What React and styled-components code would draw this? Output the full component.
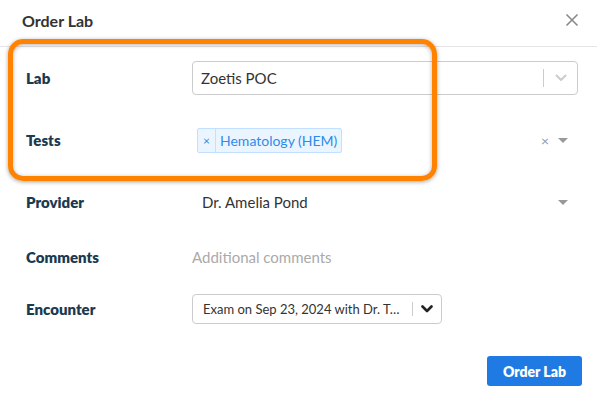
import styled, { createGlobalStyle } from "styled-components";

const Global = createGlobalStyle`
  html, body {
    margin: 0;
    padding: 0;
    background: #fff;
  }
  body {
    font-family: "Lato", "Noto Sans", sans-serif;
  }
`

const Modal = styled.div`
  position: relative;
  width: 597px;
  height: 401px;
  background: #fff;
  display: flex;
  flex-direction: column;
`

const Header = styled.div`
  height: 47px;
  border-bottom: 1px solid #e6e6e6;
  display: flex;
  align-items: center;
  justify-content: space-between;
  padding: 0 18px 6px 22px;
  box-sizing: border-box;
`

const Title = styled.h2`
  margin: 0;
  font-size: 16px;
  font-weight: 700;
  color: #333;
`

const CloseBtn = styled.button`
  border: 0;
  background: none;
  padding: 0;
  width: 14px;
  height: 14px;
  cursor: pointer;
  display: flex;
`

const Body = styled.div`
  padding: 0 19px 0 26px;
  display: flex;
  flex-direction: column;
`

const Row = styled.div`
  height: ${props => props.h}px;
  display: flex;
  align-items: center;
`

const Label = styled.label`
  width: 166px;
  flex-shrink: 0;
  font-size: 15px;
  font-weight: 800;
  color: #1b3a4f;
`

const Control = styled.div`
  flex: 1;
  display: flex;
  align-items: center;
`

const SelectBox = styled.div`
  width: ${props => props.w || "100%"};
  height: ${props => props.h}px;
  border: 1px solid #cccccc;
  border-radius: 4px;
  box-sizing: border-box;
  display: flex;
  align-items: center;
  padding-left: ${props => props.pl}px;
  font-size: ${props => props.fs}px;
  color: #333;
`

const Value = styled.span`
  flex: 1;
  white-space: nowrap;
`

const Sep = styled.span`
  width: 1px;
  align-self: stretch;
  margin: ${props => props.m};
  background: #cccccc;
`

const Indicator = styled.span`
  width: ${props => props.w}px;
  display: flex;
  justify-content: center;
  align-items: center;
`

const Tag = styled.div`
  display: inline-flex;
  align-items: stretch;
  height: 25px;
  margin-left: 5px;
  border: 1px solid #c2e0ff;
  border-radius: 2px;
  background: #ebf5ff;
  color: #2f8bea;
  font-size: 14px;
  box-sizing: border-box;
`

const TagRemove = styled.span`
  width: 17px;
  border-right: 1px solid #c2e0ff;
  display: flex;
  align-items: center;
  justify-content: center;
  font-size: 12px;
`

const TagText = styled.span`
  display: flex;
  align-items: center;
  padding: 0 4px 0 4px;
`

const Spacer = styled.div`
  flex: 1;
`

const Plain = styled.span`
  flex: 1;
  font-size: 15px;
  padding-left: ${props => props.pl}px;
  color: ${props => props.muted ? "#aaa" : "#333"};
`

const Clear = styled.span`
  color: #999;
  font-size: 14px;
  margin-right: 9px;
`

const Caret = styled.span`
  width: 0;
  height: 0;
  border-left: 5px solid transparent;
  border-right: 5px solid transparent;
  border-top: 5px solid #999;
  margin-right: 10px;
`

const Footer = styled.div`
  display: flex;
  justify-content: flex-end;
  padding: 19px 15px 0 0;
`

const PrimaryButton = styled.button`
  width: 95px;
  height: 30px;
  border: 0;
  border-radius: 3px;
  background: #1f7be3;
  color: #fff;
  font-family: inherit;
  font-size: 14px;
  font-weight: 800;
  cursor: pointer;
`

const Highlight = styled.div`
  position: absolute;
  left: 8px;
  top: 39px;
  width: 429px;
  height: 142px;
  box-sizing: border-box;
  border: 5px solid #ff8200;
  border-radius: 15px;
  box-shadow: 0 1px 4px rgba(0, 0, 0, 0.35), inset 0 1px 4px rgba(0, 0, 0, 0.3);
  pointer-events: none;
`

const Chevron = ({ color, width }) => (
  <svg width="12" height="8" viewBox="0 0 12 8">
    <path d="M1.5 1.5 L6 6 L10.5 1.5" fill="none" stroke={color} strokeWidth={width} strokeLinecap="round" strokeLinejoin="round" />
  </svg>
)

const App = () => {
  return (
    <Modal>
      <Global />
      <Header>
        <Title>Order Lab</Title>
        <CloseBtn aria-label="Close">
          <svg width="14" height="14" viewBox="0 0 14 14">
            <path d="M1.5 1.5 L12.5 12.5 M12.5 1.5 L1.5 12.5" stroke="#8a8a8a" strokeWidth="1.6" />
          </svg>
        </CloseBtn>
      </Header>
      <Body>
        <Row h={62}>
          <Label>Lab</Label>
          <Control>
            <SelectBox h={34} pl={8} fs={15}>
              <Value>Zoetis POC</Value>
              <Sep m="7px 0" />
              <Indicator w={33}><Chevron color="#cccccc" width={2} /></Indicator>
            </SelectBox>
          </Control>
        </Row>
        <Row h={62}>
          <Label>Tests</Label>
          <Control>
            <Tag>
              <TagRemove>×</TagRemove>
              <TagText>Hematology (HEM)</TagText>
            </Tag>
            <Spacer />
            <Clear>×</Clear>
            <Caret />
          </Control>
        </Row>
        <Row h={62}>
          <Label>Provider</Label>
          <Control>
            <Plain pl={10}>Dr. Amelia Pond</Plain>
            <Caret />
          </Control>
        </Row>
        <Row h={48}>
          <Label>Comments</Label>
          <Control>
            <Plain muted>Additional comments</Plain>
          </Control>
        </Row>
        <Row h={56}>
          <Label>Encounter</Label>
          <Control>
            <SelectBox w="250px" h={30} pl={10} fs={13}>
              <Value>Exam on Sep 23, 2024 with Dr. T…</Value>
              <Sep m="7px 0 7px 6px" />
              <Indicator w={28}><Chevron color="#222" width={2.6} /></Indicator>
            </SelectBox>
          </Control>
        </Row>
      </Body>
      <Footer>
        <PrimaryButton>Order Lab</PrimaryButton>
      </Footer>
      <Highlight />
    </Modal>
  );
}

export default App;
